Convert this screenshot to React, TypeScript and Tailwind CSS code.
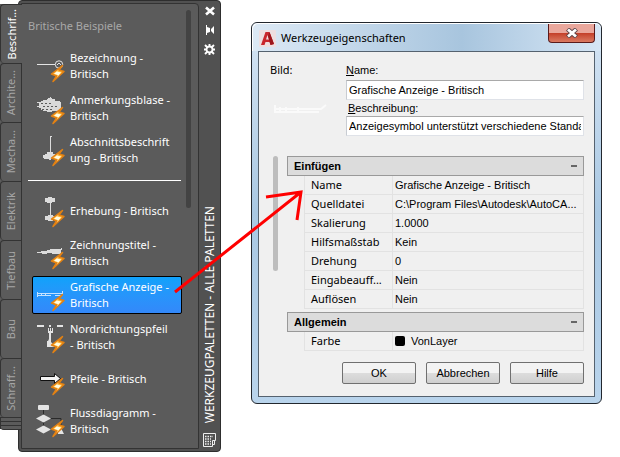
import { useState } from "react";
import type { ReactNode } from "react";
import clsx from "clsx";

interface Tool {
  id: string;
  lines: string[];
  drawing: ReactNode;
}

const tabs = ["Beschrif...", "Archite...", "Mecha...", "Elektrik", "Tiefbau", "Bau", "Schraff..."];

const labelTools: Tool[] = [
  {
    id: "bezeichnung",
    lines: ["Bezeichnung -", "Britisch"],
    drawing: (
      <g stroke="#e4e4e4" fill="none">
        <path d="M1 16.5h18" />
        <circle cx="23" cy="16.5" r="3.7" />
        <path d="M21 17l2-2 2 2" />
      </g>
    ),
  },
  {
    id: "anmerkung",
    lines: ["Anmerkungsblase -", "Britisch"],
    drawing: (
      <g>
        <path
          d="M1 12h4v-1h2v-1h4V9h1V8h2V7h1v1h1v1h3v2h5v1h1v8h-1v1h-8v1h-5v-1H7v-1H5v-2H3v-1H1v-1h2v-3H1z"
          fill="#d9d9d9"
        />
        <path d="M5 13.500h12M7 16.500h14M6 19.500h10" stroke="#5b5b5b" strokeDasharray="2 2" />
      </g>
    ),
  },
  {
    id: "abschnitt",
    lines: ["Abschnittsbeschrift", "ung - Britisch"],
    drawing: (
      <g fill="#dcdcdc">
        <path d="M14 4h2v1h-1v16h-1z" />
        <path d="M7 23h2v-1h2v-2h6v2h2v5h-4v1h-2v-1H8v-1H7z" />
      </g>
    ),
  },
];

const drawingTools: Tool[] = [
  {
    id: "erhebung",
    lines: ["Erhebung - Britisch"],
    drawing: (
      <g fill="#dcdcdc">
        <path d="M9 5h3V4h4v1h3v4h-3v1h-5V9H9zM14 10h1v12h-1z" />
        <path d="M9 23h3v-1h5v1h3v4h-3v1h-5v-1H9z" />
      </g>
    ),
  },
  {
    id: "titel",
    lines: ["Zeichnungstitel -", "Britisch"],
    drawing: <path d="M1 17h4v-1h6v-1h3v-1h11v-1h1v2h-1v4h-9v-1h-5v1H6v-1H1z" fill="#dcdcdc" />,
  },
  {
    id: "anzeige",
    lines: ["Grafische Anzeige -", "Britisch"],
    drawing: (
      <path
        d="M1.5 20v-5M1 16.500h25M26.500 14v4M1 18.500h14M5.500 16v3M9.500 16v3M19 18.500h6"
        stroke="#c4e2ff"
        fill="none"
      />
    ),
  },
  {
    id: "nordpfeil",
    lines: ["Nordrichtungspfeil", "- Britisch"],
    drawing: (
      <g fill="#e4e4e4">
        <path d="M1 6h7v2H1zM13 6h2v2h-2zM21 6h6v2h-6z" />
        <path d="M12 9h1v3h1V9h1v3h1V9h1v5h-2v9l2 2v2h2v1h-8v-6h1l1-2v-6h-1z" />
      </g>
    ),
  },
  {
    id: "pfeile",
    lines: ["Pfeile - Britisch"],
    drawing: <path d="M4.500 15.500h14v-3l6 5-6 5v-3h-14z" fill="#f4f4f4" stroke="#111" />,
  },
  {
    id: "fluss",
    lines: ["Flussdiagramm -", "Britisch"],
    drawing: (
      <g fill="#e4e4e4">
        <rect x="2" y="2" width="11" height="5" rx="1" />
        <path d="M7.500 7v19M13 15.500h12v8M13 26.500h5" stroke="#2a2a2a" fill="none" />
        <path d="M0 15.500l7.500-4 7.500 4-7.500 4zM0 26.500l7.500-4 7.500 4-7.500 4zM22 28l3-3 3 6h-6z" />
      </g>
    ),
  },
];

const insertRows = [
  ["Name", "Grafische Anzeige - Britisch"],
  ["Quelldatei", "C:\\Program Files\\Autodesk\\AutoCA..."],
  ["Skalierung", "1.0000"],
  ["Hilfsmaßstab", "Kein"],
  ["Drehung", "0"],
  ["Eingabeauff...", "Nein"],
  ["Auflösen", "Nein"],
];

function Bolt() {
  return (
    <g>
      <path
        d="M26.500 17.500L15.500 26l5 2-3.500 5.500L28 23.500l-5-1.500z"
        fill="#ffb637"
        stroke="#e28113"
        strokeWidth="1.500"
        strokeLinejoin="round"
      />
      <path d="M23 21.500l-5 4.200 4.200 1.600-2 2.700 5-5.500-4.200-1z" fill="#fffbe0" />
    </g>
  );
}

function ToolItem({ tool, active, onSelect }: { tool: Tool; active: boolean; onSelect: () => void }) {
  return (
    <button
      type="button"
      onClick={onSelect}
      className={clsx(
        "flex h-[38px] w-[150px] items-center gap-1 rounded-xs border pl-[3px] text-left text-white",
        active ? "border-black bg-linear-to-b from-[#0fa2fb] to-[#3388fa]" : "border-transparent",
      )}
    >
      <svg width="30" height="36" viewBox="0 0 30 36" className="shrink-0" aria-hidden="true">
        {tool.drawing}
        <Bolt />
      </svg>
      <span className="leading-4 whitespace-nowrap">
        {tool.lines.map((line) => (
          <span key={line} className="block">
            {line}
          </span>
        ))}
      </span>
    </button>
  );
}

function Palette() {
  const [tab, setTab] = useState(tabs[0]);
  const [tool, setTool] = useState("anzeige");

  return (
    <section className="flex shrink-0 items-start font-['Noto_Sans',sans-serif] text-[11px]">
      <div className="relative z-10 mt-1 w-[22px] rounded-bl border-b border-[#333] bg-[#5b5b5b]">
        {tabs.map((name) => (
          <button
            key={name}
            type="button"
            onClick={() => setTab(name)}
            className={clsx(
              "flex h-[59px] w-full items-center justify-center rounded-l border-t border-l border-[#333] leading-4",
              tab === name ? "text-white" : "border-r text-[#a6a6a6]",
            )}
          >
            <span className="rotate-180 whitespace-nowrap [writing-mode:vertical-rl]">{name}</span>
          </button>
        ))}
        <div className="h-1 border-t border-r border-l border-[#333]" />
        <div className="h-1 border-t border-r border-l border-[#333]" />
        <div className="h-1 border-t border-r border-l border-[#333]" />
      </div>
      <div className="-ml-1 flex rounded border border-[#2e2e2e] bg-[#515151] pt-0.5 pb-0.5 pl-0.5">
        <div className="flex h-[446px] w-[178px] rounded-tr border border-[#333] bg-[#5b5b5b]">
          <div className="pl-1.5">
            <h2 className="mt-3.5 mb-[13px] leading-4 text-[#a8a8a8]">Britische Beispiele</h2>
            <div className="flex flex-col gap-1 pl-1">
              {labelTools.map((t) => (
                <ToolItem key={t.id} tool={t} active={tool === t.id} onSelect={() => setTool(t.id)} />
              ))}
            </div>
            <hr className="my-[11px] w-[153px] border-t border-white" />
            <div className="flex flex-col gap-1 pl-1">
              {drawingTools.map((t) => (
                <ToolItem key={t.id} tool={t} active={tool === t.id} onSelect={() => setTool(t.id)} />
              ))}
            </div>
          </div>
          <div className="mt-1.5 ml-1 h-[198px] w-[5px] rounded-full bg-[#434343]" />
        </div>
        <div className="flex w-[21px] flex-col items-center pt-[3px] pb-0.5 text-white">
          <button type="button" aria-label="Schließen" className="flex h-[19px] items-start">
            <svg width="10" height="10" viewBox="0 0 10 10">
              <path d="M1 1.500l8 7M9 1.500l-8 7" stroke="#fff" strokeWidth="2.600" />
            </svg>
          </button>
          <button type="button" aria-label="Automatisch ausblenden" className="flex h-[19px] items-start">
            <svg width="10" height="10" viewBox="0 0 10 10" fill="#fff">
              <path d="M1 0h1v2l3 1v4L2 8v2H1zM9 1v8L6 6V4z" />
            </svg>
          </button>
          <button type="button" aria-label="Eigenschaften" className="flex h-[19px] items-start">
            <svg width="11" height="11" viewBox="0 0 11 11" fill="none" stroke="#fff">
              <circle cx="5.500" cy="5.500" r="3" strokeWidth="1.800" />
              <path
                d="M5.500 0v2.500M5.500 8.500v2.500M0 5.500h2.500M8.500 5.500h2.500M1 1l2.500 2.500M10 1L7.500 3.500M1 10l2.500-2.500M10 10L7.500 7.500"
                strokeWidth="1.900"
              />
            </svg>
          </button>
          <h1 className="mt-auto mb-2.5 rotate-180 text-[12px] leading-4 whitespace-nowrap [writing-mode:vertical-rl]">
            WERKZEUGPALETTEN - ALLE PALETTEN
          </h1>
          <button type="button" aria-label="Palettenmenü">
            <svg width="13" height="14" viewBox="0 0 13 14" fill="none" stroke="#eee">
              <path d="M.500.500h12v7h-3v6h-9zM9.500 11.500h2v-4" />
              <path d="M2 3.500h8M2 6h6M2 8.500h6M2 11h6" strokeDasharray="1.500 1" strokeWidth="1.300" />
            </svg>
          </button>
        </div>
      </div>
    </section>
  );
}

function PropertyGroup({ title, rows }: { title: string; rows: ReactNode[][] }) {
  const [open, setOpen] = useState(true);

  return (
    <div>
      <div className="flex h-5 items-center justify-between border border-[#999] bg-[#dcdcdc] pr-1.5 pl-1.5">
        <h3 className="leading-4 font-bold">{title}</h3>
        <button
          type="button"
          aria-label={title + " ein- oder ausklappen"}
          onClick={() => setOpen(!open)}
          className="flex h-4 w-1.5 items-center"
        >
          <span className="h-0.5 w-full bg-[#666]" />
        </button>
      </div>
      {open && (
        <div className="pl-[17px]">
          <table className="w-full table-fixed border-separate border-spacing-0 border-r border-l border-[#e2e2e2]">
            <tbody>
              {rows.map(([label, value], i) => (
                <tr key={i} className="h-[19px]">
                  <th
                    scope="row"
                    className="w-[87px] border-b border-[#e2e2e2] p-0 pl-1.5 text-left font-['Noto_Sans',sans-serif] leading-4 font-normal whitespace-nowrap"
                  >
                    {label}
                  </th>
                  <td className="border-b border-l border-[#e2e2e2] p-0 pl-0.5 leading-4 whitespace-nowrap">{value}</td>
                </tr>
              ))}
            </tbody>
          </table>
        </div>
      )}
    </div>
  );
}

const fieldClass =
  "h-5 w-full border border-t-[#a9a9a9] border-r-[#dfe2e8] border-b-[#dfe2e8] border-l-[#c8ccd2] bg-white px-0.5 outline-none";
const buttonClass =
  "h-[22px] w-[74px] rounded-xs border border-[#707070] bg-linear-to-b from-[#f3f3f3] from-50% via-[#dddddd] via-50% to-[#cfcfcf] text-center";

function PropertiesDialog() {
  const [name, setName] = useState("Grafische Anzeige - Britisch");
  const [description, setDescription] = useState("Anzeigesymbol unterstützt verschiedene Standards");

  return (
    <section
      role="dialog"
      aria-labelledby="dialog-title"
      className="mt-[22px] mr-[18px] ml-[30px] min-w-0 flex-1 rounded-md border border-[#22272e] bg-linear-to-b from-[#d6e5f4] via-[#a9c8e3] to-[#b9d4ec] px-1.5 pb-1.5 font-['Liberation_Sans',sans-serif] text-[11px]"
    >
      <header className="-mx-1.5 flex h-7 items-start rounded-t-md border-t border-l border-white bg-linear-to-r from-[#dce9f5] via-[#a8c5de] via-60% to-[#d6e6f5] pr-1.5 pl-1.5">
        <svg width="17" height="17" viewBox="0 0 17 17" className="mt-1.5 shrink-0" aria-hidden="true">
          <rect width="17" height="17" rx="1" fill="#eedfe0" />
          <path d="M2 15L6.500 2h4l4.500 12-3.500 1-1-3H6.500l-1 3z" fill="#c9262c" />
          <path d="M7 9.500L8.500 5l1.500 4.500z" fill="#eedfe0" />
          <path d="M10.500 2L15 14l-3.500 1-2.500-9z" fill="#9c171c" />
        </svg>
        <h2 id="dialog-title" className="mt-1.5 ml-[5px] flex-1 font-['Noto_Sans',sans-serif] leading-4">
          Werkzeugeigenschaften
        </h2>
        <button
          type="button"
          aria-label="Schließen"
          className="flex h-[19px] w-[47px] items-center justify-center rounded-b border border-t-0 border-[#5a1b1b] bg-linear-to-b from-[#eaa79c] from-50% via-[#c33d27] via-50% to-[#da7a62]"
        >
          <svg width="12" height="10" viewBox="0 0 12 10">
            <path d="M1.500 1l9 8M10.500 1l-9 8" stroke="#5c4448" strokeWidth="4.500" />
            <path d="M2 1.500l8 7M10 1.500l-8 7" stroke="#fff" strokeWidth="2.800" />
          </svg>
        </button>
      </header>
      <div className="border border-[#55626f] bg-[#f0f0f0] pr-2.5 pb-3 pl-[11px] text-black">
        <div className="flex pt-2.5">
          <div className="w-[76px] shrink-0">
            <p className="font-['Noto_Sans',sans-serif] leading-4">Bild:</p>
            <svg width="54" height="10" viewBox="0 0 54 10" className="mt-[26px] ml-1" aria-hidden="true">
              <path d="M1 1v7h44M1 5h46l5-4M6 3v4M12 3v4M24 3v4" stroke="#fafafa" strokeWidth="2" fill="none" />
            </svg>
          </div>
          <div className="min-w-0 flex-1">
            <label htmlFor="tool-name" className="block leading-4">
              <u>N</u>ame:
            </label>
            <input
              id="tool-name"
              value={name}
              onChange={(e) => setName(e.target.value)}
              className={clsx(fieldClass, "mt-0.5")}
            />
            <label htmlFor="tool-description" className="block pl-0.5 leading-4">
              <u>B</u>eschreibung:
            </label>
            <input
              id="tool-description"
              value={description}
              onChange={(e) => setDescription(e.target.value)}
              className={fieldClass}
            />
          </div>
        </div>
        <div className="mt-5 flex pl-[3px]">
          <div className="mr-[9px] h-[115px] w-[5px] shrink-0 rounded-full bg-[#bdbdbd]" />
          <div className="flex min-w-0 flex-1 flex-col gap-[3px]">
            <PropertyGroup title="Einfügen" rows={insertRows} />
            <PropertyGroup
              title="Allgemein"
              rows={[
                [
                  "Farbe",
                  <span className="flex items-center gap-1.5">
                    <span className="size-2.5 rounded-xs bg-black" />
                    VonLayer
                  </span>,
                ],
              ]}
            />
          </div>
        </div>
        <div className="mt-[11px] flex justify-end gap-2.5">
          <button type="button" className={buttonClass}>
            OK
          </button>
          <button type="button" className={buttonClass}>
            Abbrechen
          </button>
          <button type="button" className={buttonClass}>
            Hilfe
          </button>
        </div>
      </div>
    </section>
  );
}

export default function App() {
  return (
    <main className="relative flex min-h-screen items-start bg-white">
      <Palette />
      <PropertiesDialog />
      <svg
        width="620"
        height="457"
        viewBox="0 0 620 457"
        className="pointer-events-none absolute top-0 left-0 z-20"
        aria-hidden="true"
      >
        <path d="M175 292L301 192M266 197l35-5-4 28" fill="none" stroke="#f00" strokeWidth="3" />
      </svg>
    </main>
  );
}
